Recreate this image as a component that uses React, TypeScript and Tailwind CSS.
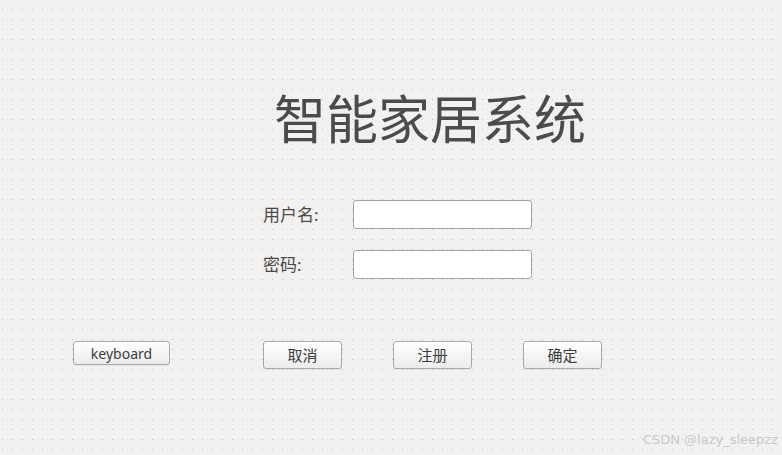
export default function App() {
  const btn =
    'flex items-center justify-center rounded-[3px] border border-[#a9a9a9] bg-[linear-gradient(#ffffff,#ebebeb)] text-[#3c3c3c] shadow-[0_1px_0_rgba(0,0,0,0.04)]'

  return (
    <div
      className="relative flex h-[455px] w-[782px] flex-col bg-[#f2f1f0] bg-[image:radial-gradient(circle_at_0.5px_0.5px,#bdbdbd_0.75px,transparent_0.9px)] bg-[size:10px_10px] bg-[position:2px_9px] font-['Noto_Sans','Noto_Sans_CJK_SC',sans-serif] text-[#4a4a4a]"
    >
      <h1 className="ml-[274px] mt-[85px] text-[52px] font-normal leading-[64px] text-[#4b4b4b] font-['Noto_Sans_CJK_SC',sans-serif]">
        智能家居系统
      </h1>

      <div className="ml-[263px] mt-[51px] grid grid-cols-[90px_179px] items-center gap-y-[21px]">
        <label className="text-[17px] text-[#4a4a4a]">用户名:</label>
        <input className="h-[29px] w-[179px] rounded-[3px] border border-[#a3a3a3] bg-white outline-none" />
        <label className="text-[17px] text-[#4a4a4a]">密码:</label>
        <input
          type="password"
          className="h-[29px] w-[179px] rounded-[3px] border border-[#a3a3a3] bg-white outline-none"
        />
      </div>

      <div className="mt-[62px] flex items-start">
        <button className={`${btn} ml-[73px] h-[24px] w-[97px] text-[14px]`}>keyboard</button>
        <button className={`${btn} ml-[93px] h-[28px] w-[79px] text-[15px]`}>取消</button>
        <button className={`${btn} ml-[51px] h-[28px] w-[79px] text-[15px]`}>注册</button>
        <button className={`${btn} ml-[51px] h-[28px] w-[79px] text-[15px]`}>确定</button>
      </div>

      <div className="absolute bottom-[6px] right-[4px] text-[13px] text-[#c9c9c9] font-['DejaVu_Sans',sans-serif]">
        CSDN @lazy_sleepzz
      </div>
    </div>
  )
}
